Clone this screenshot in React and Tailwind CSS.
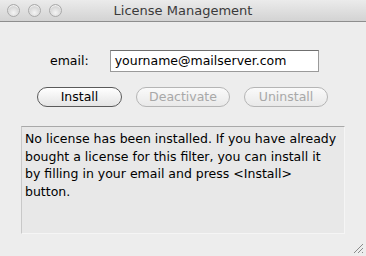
import React from "react";

const Light = () => (
  <div className="w-[13px] h-[13px] rounded-full border border-[#a9a9a9] bg-[radial-gradient(circle_at_50%_70%,#f4f4f4,#d2d2d2_70%,#bcbcbc)] shadow-[inset_0_1px_1px_rgba(255,255,255,0.8)]" />
);

const Pill = ({ label, disabled, w }) => (
  <button
    className={`${w} h-[20px] rounded-full border text-[12.5px] leading-none flex items-center justify-center ${
      disabled
        ? "border-[#b5b5b5] text-[#a8a8a8] bg-gradient-to-b from-[#fafafa] to-[#e9e9e9]"
        : "border-[#5a5a5a] text-black bg-gradient-to-b from-white to-[#e4e4e4]"
    }`}
  >
    {label}
  </button>
);

export default function App() {
  return (
    <div className="w-[366px] h-[256px] bg-[#ededed] flex flex-col overflow-hidden relative" style={{ fontFamily: '"DejaVu Sans", sans-serif' }}>
      {/* title bar */}
      <div className="h-[22px] shrink-0 bg-gradient-to-b from-[#ebebeb] to-[#d3d3d3] border-b border-[#8e8e8e] flex items-center relative">
        <div className="flex gap-[8px] pl-[7px]">
          <Light />
          <Light />
          <Light />
        </div>
        <div className="absolute inset-0 flex items-center justify-center text-[13px] text-[#3a3a3a] pt-[1px]">
          License Management
        </div>
      </div>

      <div className="flex flex-col">
        <div className="flex items-center mt-[28px] h-[22px]">
          <span className="ml-[50px] text-[12.5px] text-black">email:</span>
          <div className="ml-[21px] w-[209px] h-[22px] bg-white border border-[#9a9a9a] border-t-[#6f6f6f] flex items-center pl-[4px] text-[12.5px] text-black">
            yourname@mailserver.com
          </div>
        </div>

        <div className="flex mt-[15px] ml-[37px] gap-[14px]">
          <Pill label="Install" w="w-[85px]" />
          <Pill label="Deactivate" w="w-[94px]" disabled />
          <Pill label="Uninstall" w="w-[84px]" disabled />
        </div>

        <div className="mt-[19px] ml-[21px] w-[324px] h-[108px] bg-[#e8e8e8] border border-[#c8c8c8] border-t-[#a9a9a9] border-r-[#f5f5f5] border-b-[#f5f5f5] pl-[3px] pt-[3px] text-[12.5px] leading-[17.5px] text-black whitespace-nowrap overflow-hidden">
          No license has been installed. If you have already
          <br />
          bought a license for this filter, you can install it
          <br />
          by filling in your email and press &lt;Install&gt;
          <br />
          button.
        </div>
      </div>

      <svg className="absolute right-[2px] bottom-[2px]" width="12" height="12" viewBox="0 0 12 12">
        <path d="M11 2 L2 11 M11 6 L6 11 M11 10 L10 11" stroke="#8a8a8a" strokeWidth="1" />
      </svg>
    </div>
  );
}
